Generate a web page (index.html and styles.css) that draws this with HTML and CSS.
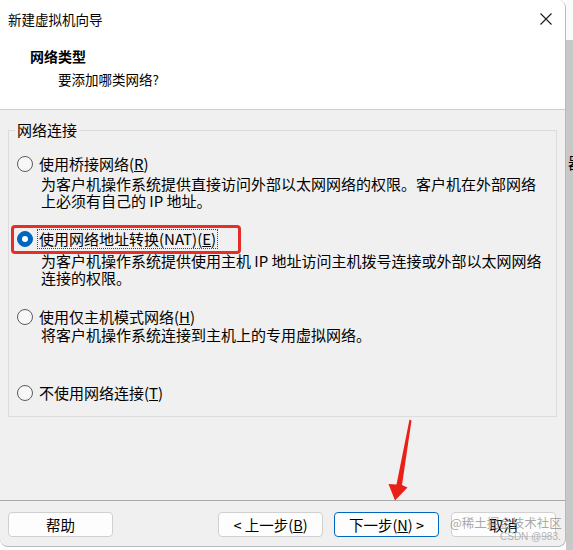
FILE: index.html
```html
<!DOCTYPE html>
<html lang="zh-CN">
<head>
 <meta charset="UTF-8">
 <meta name="viewport" content="width=device-width, initial-scale=1.0">
 <title>新建虚拟机向导</title>
 <link rel="stylesheet" href="styles.css">
</head>
<body>
 <div class="page">
  <div class="dialog">
   <div class="header">
    <div class="titlebar">
     <span class="title">新建虚拟机向导</span>
     <button class="close-button" aria-label="关闭">
      <svg width="12" height="12" viewBox="0 0 12 12"><path d="M0.5 0.5 L11.5 11.5 M11.5 0.5 L0.5 11.5" stroke="#1a1a1a" stroke-width="1.1" fill="none"/></svg>
     </button>
    </div>
    <div class="heading">网络类型</div>
    <div class="subheading">要添加哪类网络?</div>
   </div>

   <div class="content">
    <fieldset class="group">
     <legend>网络连接</legend>

     <div class="option">
      <label class="radio-row"><span class="radio"></span><span class="label">使用桥接网络(<u>R</u>)</span></label>
      <p class="desc">为客户机操作系统提供直接访问外部以太网网络的权限。客户机在外部网络<br>上必须有自己的 IP 地址。</p>
     </div>

     <div class="option option-nat">
      <label class="radio-row"><span class="radio checked"></span><span class="label focused">使用网络地址转换(NAT)(<u>E</u>)</span></label>
      <p class="desc">为客户机操作系统提供使用主机 IP 地址访问主机拨号连接或外部以太网网络<br>连接的权限。</p>
     </div>

     <div class="option option-host">
      <label class="radio-row"><span class="radio"></span><span class="label">使用仅主机模式网络(<u>H</u>)</span></label>
      <p class="desc">将客户机操作系统连接到主机上的专用虚拟网络。</p>
     </div>

     <div class="option option-none">
      <label class="radio-row"><span class="radio"></span><span class="label">不使用网络连接(<u>T</u>)</span></label>
     </div>
    </fieldset>
   </div>

   <div class="footer">
    <button class="btn">帮助</button>
    <button class="btn btn-prev">&lt; 上一步(<u>B</u>)</button>
    <button class="btn btn-next">下一步(<u>N</u>) &gt;</button>
    <button class="btn btn-cancel">取消</button>
   </div>

   <!-- 标注 -->
   <div class="highlight"></div>
   <svg class="arrow" width="40" height="90" viewBox="380 415 40 90">
    <polygon points="409.5,419.5 411.5,420.5 402,485 407.5,487.5 395,500.5 388.5,484 396.5,484.5" fill="#ea1f17"/>
   </svg>
   <div class="watermark">
    <span class="wm-main">@稀土掘金技术社区</span>
    <span class="wm-sub">CSDN @983.</span>
   </div>
  </div>
  <div class="side"><span>器</span></div>
 </div>
</body>
</html>
```

FILE: styles.css
```css
body {
 margin: 0;
 background: #ffffff;
 color: #000000;
 font-family: "Noto Sans CJK SC", "Liberation Sans", sans-serif;
}

.page {
 display: flex;
 height: 550px;
}

.dialog {
 position: relative;
 display: flex;
 flex-direction: column;
 width: 566px;
 height: 547px;
 box-sizing: border-box;
 background: #f0f0f0;
 border-right: 1px solid #b9b9b9;
 border-bottom: 1px solid #b9b9b9;
 border-radius: 0 8px 8px 8px;
 overflow: hidden;
}

.side {
 flex: 1;
 overflow: hidden;
 background: linear-gradient(#fafafa 0 40px, #c8c8c8 40px);
 padding-top: 152px;
 font-size: 16px;
 line-height: 20px;
 white-space: nowrap;
}

.side span {
 display: block;
 padding-left: 2px;
}

/* ヘッダー */
.header {
 height: 110px;
 box-sizing: border-box;
 background: #ffffff;
 border-bottom: 1px solid #cdcdcd;
}

.titlebar {
 display: flex;
 justify-content: space-between;
 align-items: center;
 height: 36px;
 padding: 2px 13px 0 8px;
 box-sizing: border-box;
}

.title {
 font-size: 13.5px;
 line-height: 20px;
}

.close-button {
 display: flex;
 padding: 0;
 border: none;
 background: none;
}

.heading {
 margin-top: 10px;
 padding-left: 30px;
 font-size: 14px;
 font-weight: bold;
 line-height: 20px;
}

.subheading {
 margin-top: 3px;
 padding-left: 58px;
 font-size: 13.5px;
 line-height: 20px;
}

/* 本体 */
.content {
 flex: 1;
 padding: 11px 8px 0 8px;
}

.group {
 margin: 0;
 padding: 15px 8px 13px 8px;
 border: 1px solid #dcdcdc;
 min-width: 0;
}

.group legend {
 margin-left: -2px;
 padding: 0 2px;
 font-size: 15px;
 line-height: 18px;
}

.option-nat {
 margin-top: 20px;
}

.option-host {
 margin-top: 21px;
}

.option-none {
 margin-top: 39px;
}

.radio-row {
 display: flex;
 align-items: center;
 gap: 4px;
 height: 20px;
 font-size: 15px;
}

.radio {
 width: 16px;
 height: 16px;
 box-sizing: border-box;
 border: 1px solid #5c5c5c;
 border-radius: 50%;
 background: #f7f7f7;
 flex-shrink: 0;
}

.radio.checked {
 position: relative;
 border-color: #0067c0;
 background: #0067c0;
}

.radio.checked::after {
 content: "";
 position: absolute;
 left: 4px;
 top: 4px;
 width: 6px;
 height: 6px;
 border-radius: 50%;
 background: #ffffff;
}

.label {
 padding: 0 1px;
 line-height: 18px;
 border: 1px dotted transparent;
 white-space: nowrap;
}

.label.focused {
 border-color: #444444;
}

.desc {
 margin: 2px 0 0 0;
 padding-left: 24px;
 font-size: 15px;
 line-height: 16.5px;
 white-space: nowrap;
}

.option-nat .desc {
 margin-top: 4px;
}

.option-host .desc {
 margin-top: 0;
}

/* フッター */
.footer {
 display: flex;
 height: 46px;
 box-sizing: border-box;
 padding: 11px 9px 0 8px;
 border-top: 1px solid #a9a9a9;
}

.btn {
 width: 105px;
 height: 25px;
 padding: 0;
 border: 1px solid #d0d0d0;
 border-radius: 4px;
 background: #fdfdfd;
 color: #000000;
 font-family: "Noto Sans CJK SC", "Liberation Sans", sans-serif;
 font-size: 14.5px;
 line-height: 22px;
}

.btn-prev {
 margin-left: auto;
}

.btn-next {
 margin-left: 11px;
 border-color: #0067c0;
}

.btn-cancel {
 margin-left: 12px;
}

/* 注釈 */
.highlight {
 position: absolute;
 left: 11px;
 top: 225px;
 width: 230px;
 height: 29px;
 box-sizing: border-box;
 border: 3px solid #e62e28;
 border-radius: 4px;
}

.arrow {
 position: absolute;
 left: 380px;
 top: 415px;
}

.watermark {
 position: absolute;
 left: 450px;
 top: 517px;
 display: flex;
 flex-direction: column;
 line-height: 1;
 color: rgba(130, 130, 130, 0.7);
 pointer-events: none;
}

.wm-main {
 font-size: 12.5px;
}

.wm-sub {
 margin-top: 2px;
 padding-left: 50px;
 font-size: 10px;
 font-family: "Liberation Sans", sans-serif;
 color: rgba(160, 160, 160, 0.8);
}
```
